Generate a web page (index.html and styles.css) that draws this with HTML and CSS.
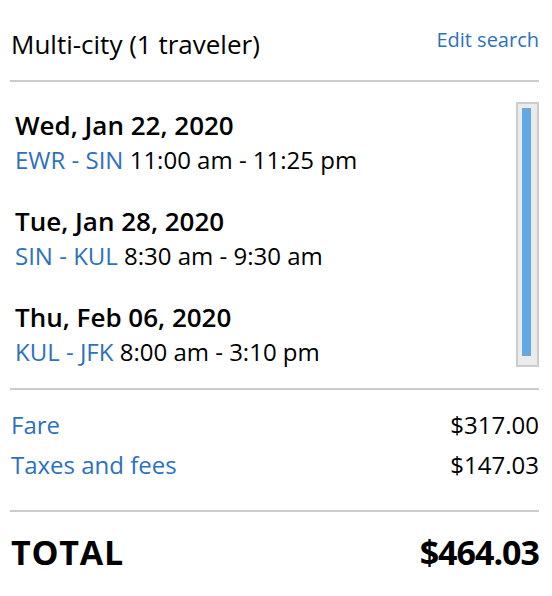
FILE: index.html
```html
<!DOCTYPE html>
<html>
<head>
<meta charset="utf-8">
<link rel="stylesheet" href="styles.css">
</head>
<body>
<div class="summary">
  <div class="head">
    <div class="title">Multi-city (1 traveler)</div>
    <a class="edit" href="#">Edit search</a>
  </div>
  <div class="legs">
    <div class="leg-list">
      <div class="leg">
        <div class="date">Wed, Jan 22, 2020</div>
        <div class="route"><span class="code">EWR - SIN</span> 11:00 am - 11:25 pm</div>
      </div>
      <div class="leg">
        <div class="date">Tue, Jan 28, 2020</div>
        <div class="route"><span class="code">SIN - KUL</span> 8:30 am - 9:30 am</div>
      </div>
      <div class="leg">
        <div class="date">Thu, Feb 06, 2020</div>
        <div class="route"><span class="code">KUL - JFK</span> 8:00 am - 3:10 pm</div>
      </div>
    </div>
    <div class="scrollbar"><div class="thumb"></div></div>
  </div>
  <div class="prices">
    <div class="row"><span class="label">Fare</span><span class="amount">$317.00</span></div>
    <div class="row"><span class="label">Taxes and fees</span><span class="amount">$147.03</span></div>
  </div>
  <div class="total">
    <span class="total-label">TOTAL</span><span class="total-amount">$464.03</span>
  </div>
</div>
</body>
</html>
```
FILE: styles.css
```css
html, body {
  margin: 0;
  padding: 0;
  background: #fff;
}
body {
  font-family: "Open Sans", "DejaVu Sans", sans-serif;
  color: #000;
}
.summary {
  padding: 0 13px 0 10px;
}
.head {
  display: flex;
  justify-content: space-between;
  align-items: flex-start;
  padding: 28px 0 20px 1px;
  border-bottom: 2px solid #cccccc;
}
.title {
  font-size: 26px;
  line-height: 32px;
}
.edit {
  font-size: 20px;
  line-height: 24px;
  color: #2b71bd;
  text-decoration: none;
}
.legs {
  display: flex;
  justify-content: space-between;
  align-items: flex-start;
  padding: 20px 0 20px 5px;
  border-bottom: 2px solid #cccccc;
}
.leg-list {
  display: flex;
  flex-direction: column;
  gap: 29px;
  margin-top: 7px;
}
.leg {
  display: flex;
  flex-direction: column;
  gap: 3px;
}
.date {
  font-size: 26px;
  line-height: 32px;
  font-weight: 600;
}
.route {
  font-size: 24px;
  line-height: 32px;
}
.code {
  color: #2b71bd;
}
.scrollbar {
  width: 15px;
  height: 257px;
  border: 2px solid #cccccc;
  background: #ebebeb;
  padding: 4px 0 0 4px;
  display: flex;
}
.thumb {
  width: 9px;
  height: 248px;
  background: #62a8e2;
}
.prices {
  display: flex;
  flex-direction: column;
  gap: 8px;
  padding: 19px 0 29px 1px;
  border-bottom: 2px solid #cccccc;
}
.row {
  display: flex;
  justify-content: space-between;
  font-size: 24px;
  line-height: 32px;
}
.label {
  color: #2b71bd;
}
.total {
  display: flex;
  justify-content: space-between;
  padding: 18px 0 0 1px;
  font-size: 34px;
  line-height: 44px;
  font-weight: 700;
}
.total-label {
  letter-spacing: 0.8px;
}
.total-amount {
  letter-spacing: -1px;
}
```
